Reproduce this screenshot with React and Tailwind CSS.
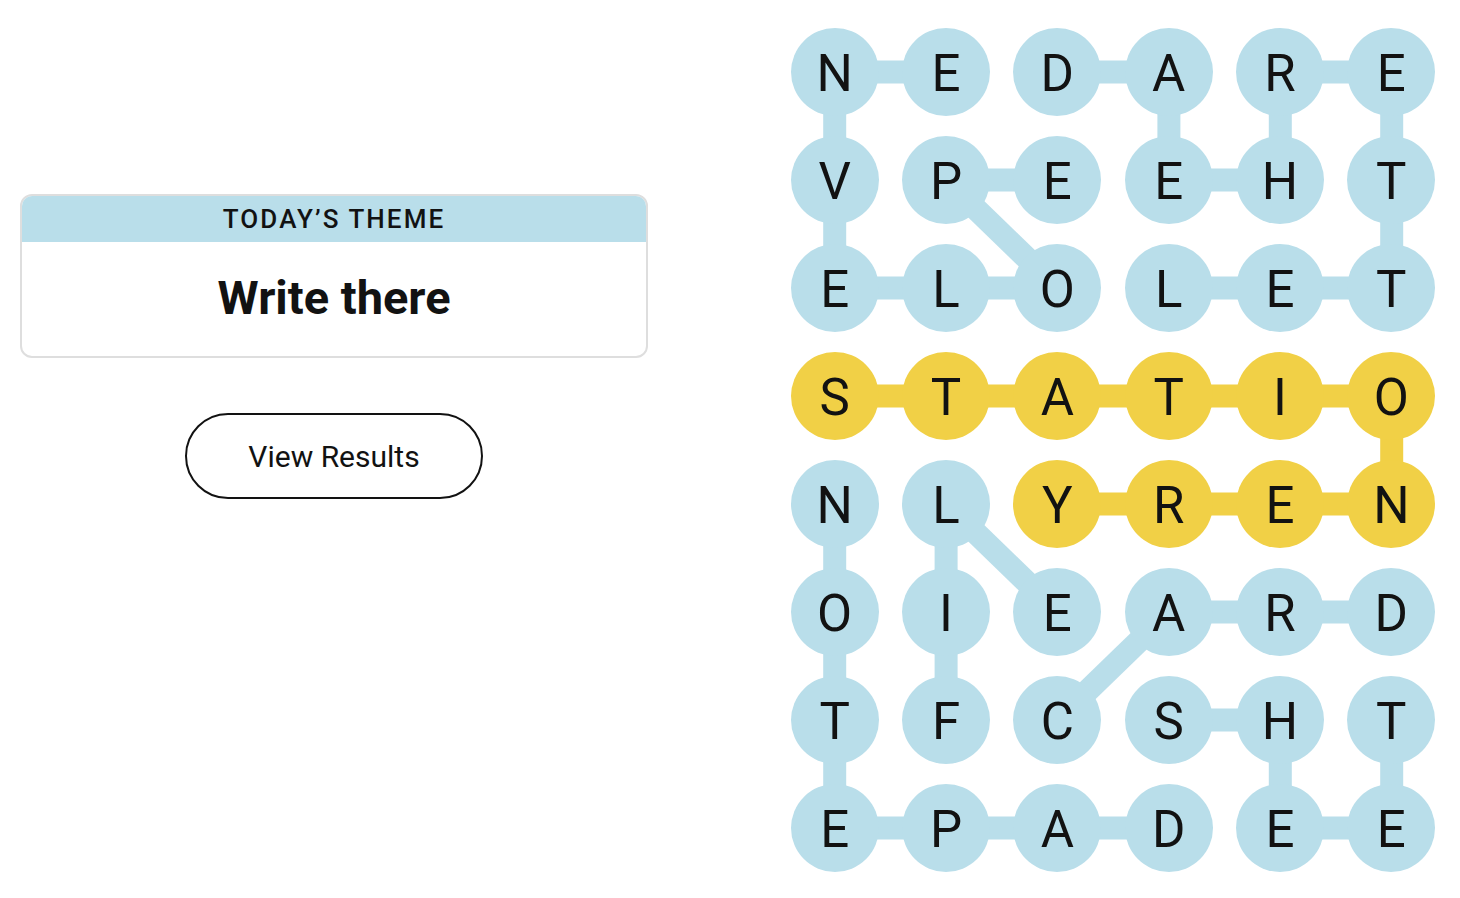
import React from "react";

const BLUE = "#b9deea";
const YELLOW = "#f1d046";

const ROWS = ["NEDARE", "VPEEHT", "ELOLET", "STATIO", "NLYREN", "OIEARD", "TFCSHT", "EPADEE"];

// cells that belong to the found spangram
const GOLD = new Set(["3-0", "3-1", "3-2", "3-3", "3-4", "3-5", "4-2", "4-3", "4-4", "4-5"]);

const EDGES = [
  [0, 0, 0, 1], [0, 2, 0, 3], [0, 4, 0, 5], [0, 0, 1, 0], [0, 3, 1, 3], [0, 4, 1, 4], [0, 5, 1, 5],
  [1, 0, 2, 0], [1, 1, 1, 2], [1, 1, 2, 2], [1, 3, 1, 4], [1, 5, 2, 5],
  [2, 0, 2, 1], [2, 1, 2, 2], [2, 3, 2, 4], [2, 4, 2, 5],
  [3, 0, 3, 1], [3, 1, 3, 2], [3, 2, 3, 3], [3, 3, 3, 4], [3, 4, 3, 5], [3, 5, 4, 5],
  [4, 2, 4, 3], [4, 3, 4, 4], [4, 4, 4, 5],
  [4, 0, 5, 0], [4, 1, 5, 1], [4, 1, 5, 2],
  [5, 3, 5, 4], [5, 4, 5, 5], [5, 3, 6, 2], [5, 0, 6, 0], [5, 1, 6, 1],
  [6, 3, 6, 4], [6, 4, 7, 4], [6, 5, 7, 5], [6, 0, 7, 0],
  [7, 0, 7, 1], [7, 1, 7, 2], [7, 2, 7, 3], [7, 4, 7, 5],
];

const CW = 111.4;
const CH = 108;
const cx = (c) => c * CW + CW / 2;
const cy = (r) => r * CH + CH / 2;

function Board() {
  return (
    <div className="relative w-[668px] h-[864px]">
      <svg className="absolute inset-0" width="668" height="864" viewBox="0 0 668 864">
        {EDGES.map(([r1, c1, r2, c2], i) => (
          <line
            key={i}
            x1={cx(c1)}
            y1={cy(r1)}
            x2={cx(c2)}
            y2={cy(r2)}
            stroke={GOLD.has(`${r1}-${c1}`) && GOLD.has(`${r2}-${c2}`) ? YELLOW : BLUE}
            strokeWidth="23"
          />
        ))}
      </svg>
      <div className="relative grid grid-cols-6 grid-rows-8 w-full h-full">
        {ROWS.map((row, r) =>
          row.split("").map((ch, c) => (
            <div key={`${r}-${c}`} className="flex items-center justify-center">
              <div
                className={`w-[88px] h-[88px] rounded-full flex items-center justify-center text-[51px] leading-none text-[#121212] ${
                  GOLD.has(`${r}-${c}`) ? "bg-[#f1d046]" : "bg-[#b9deea]"
                }`}
              >
                <span className="pt-[2px]">{ch}</span>
              </div>
            </div>
          ))
        )}
      </div>
    </div>
  );
}

export default function App() {
  return (
    <div
      className="w-[1460px] h-[898px] bg-white flex"
      style={{ fontFamily: "Roboto, 'Liberation Sans', sans-serif" }}
    >
      <div className="w-[760px] pl-[20px] pt-[194px] flex flex-col">
        <div className="w-[628px] h-[164px] rounded-[12px] border-2 border-[#dedede] overflow-hidden flex flex-col">
          <div className="h-[48px] bg-[#b9deea] flex items-center justify-center text-[26px] font-medium tracking-[0.08em] text-[#121212] -mt-[2px] pt-[3px]">
            TODAY’S THEME
          </div>
          <div className="flex-1 flex items-center justify-center text-[47px] font-bold text-[#121212] pb-[2px]">
            Write there
          </div>
        </div>
        <div className="w-[628px] flex justify-center mt-[55px]">
          <button className="w-[298px] h-[86px] rounded-full border-2 border-[#121212] text-[30px] text-[#121212] bg-white">
            View Results
          </button>
        </div>
      </div>
      <div className="pl-[19px] pt-[18px]">
        <Board />
      </div>
    </div>
  );
}
